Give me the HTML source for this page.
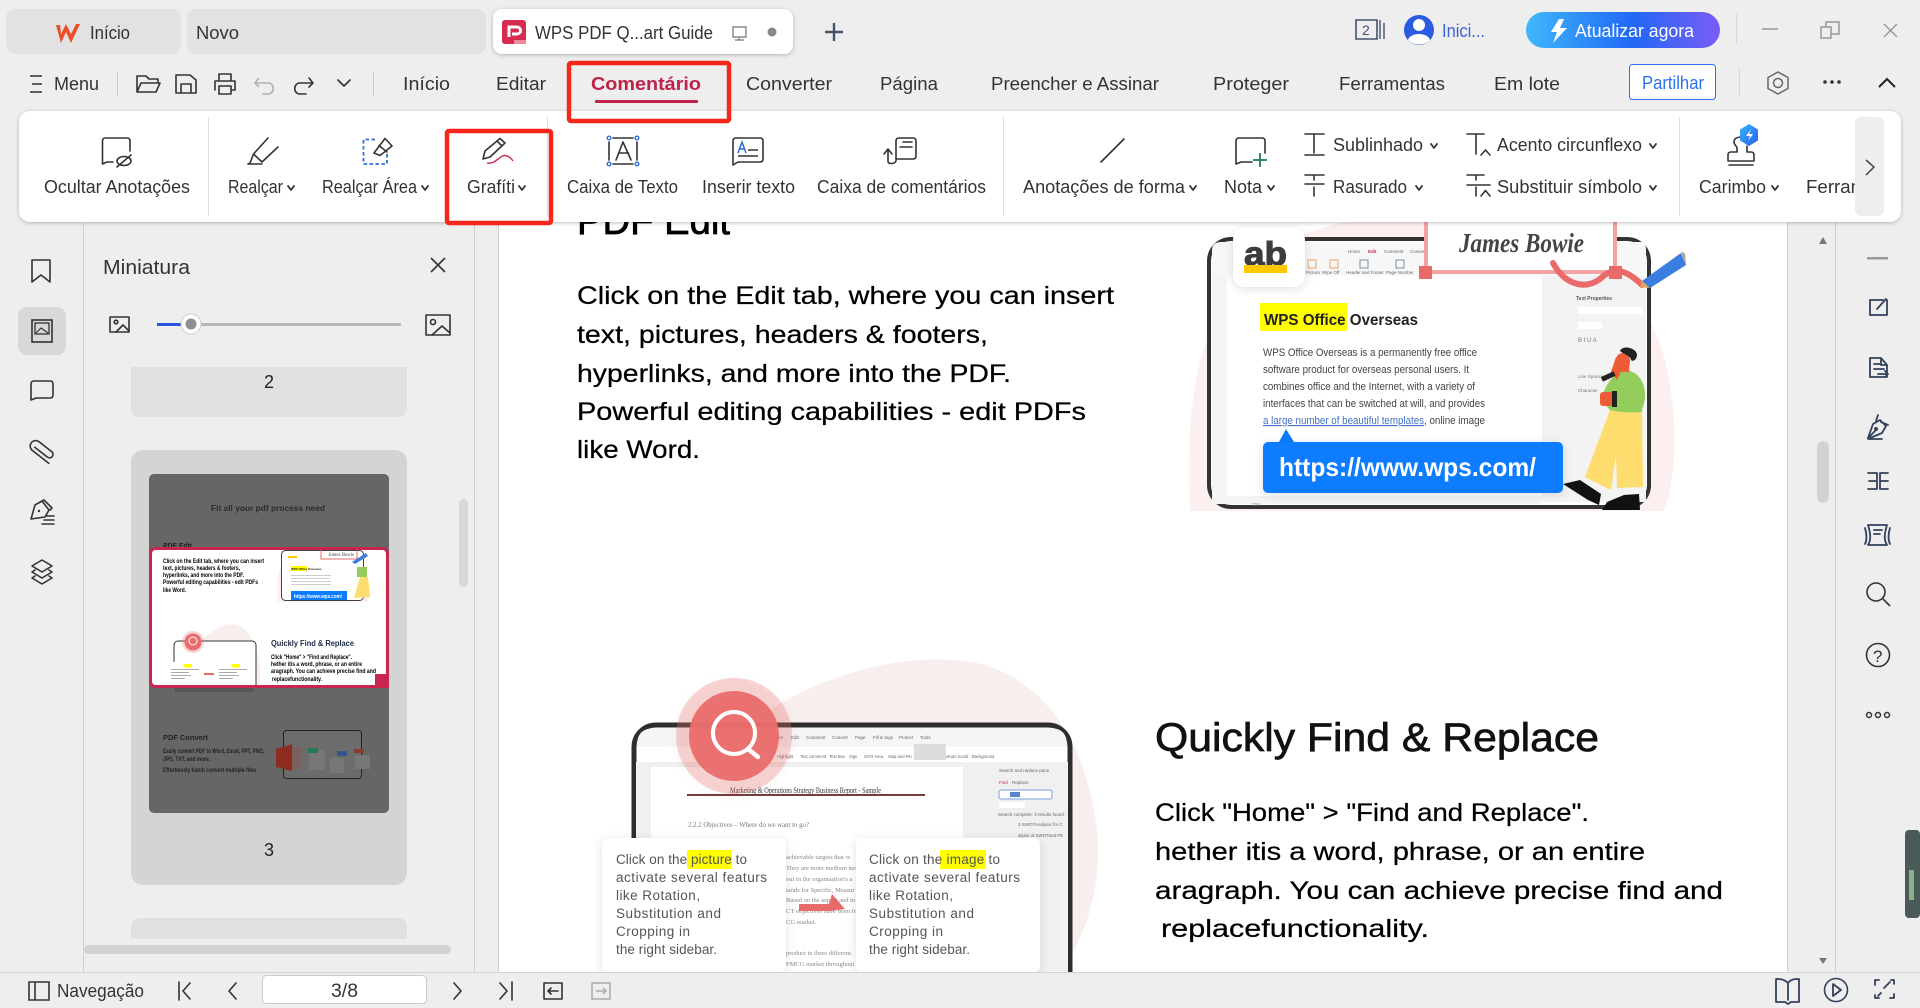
<!DOCTYPE html>
<html lang="pt"><head><meta charset="utf-8"><title>WPS PDF</title>
<style>
html,body{margin:0;padding:0;width:1920px;height:1008px;overflow:hidden;background:#eee}
svg{display:block}
text{font-family:"Liberation Sans",sans-serif;fill:#333;font-size:18px}
.i{fill:none;stroke:#333;stroke-width:1.6;stroke-linecap:round;stroke-linejoin:round}
.n{fill:none;stroke:#33415c;stroke-width:1.8;stroke-linecap:round;stroke-linejoin:round}
.d{fill:#000;font-size:25px;stroke:#000;stroke-width:.25}
.h{fill:#555;font-size:13.5px}
.s{fill:#444;font-size:11.3px}
.t{font-size:6px;fill:#000;font-weight:bold}
</style></head><body>
<svg width="1920" height="1008" viewBox="0 0 1920 1008" xmlns="http://www.w3.org/2000/svg">
<defs>
<linearGradient id="g" x1="0" x2="1" y1="0" y2="0"><stop offset="0" stop-color="#3fb8fb"/><stop offset=".55" stop-color="#2168f5"/><stop offset="1" stop-color="#7a5cf6"/></linearGradient>
<linearGradient id="b" x1="0" x2="1" y1="0" y2="1"><stop offset="0" stop-color="#35b6fb"/><stop offset="1" stop-color="#2a5ff0"/></linearGradient>
<filter id="sh" x="-5%" y="-20%" width="110%" height="140%"><feDropShadow dx="0" dy="1" stdDeviation="2" flood-color="#000" flood-opacity=".25"/></filter>
<filter id="sc" x="-15%" y="-15%" width="130%" height="130%"><feDropShadow dx="0" dy="2" stdDeviation="5" flood-color="#000" flood-opacity=".12"/></filter>
<clipPath id="docclip"><rect x="499" y="222" width="1288" height="750"/></clipPath>
<clipPath id="thumbclip"><rect x="152" y="550" width="234" height="135"/></clipPath>
<clipPath id="rb"><rect x="19" y="111" width="1836" height="111"/></clipPath>
</defs>
<rect width="1920" height="1008" fill="#eee"/>

<!-- DOCUMENT -->
<rect x="474" y="222" width="1" height="750" fill="#cfcfcf"/>
<rect x="498" y="222" width="1" height="750" fill="#d2d2d2"/>
<rect x="499" y="222" width="1288" height="750" fill="#fff"/>
<rect x="1787" y="222" width="1" height="750" fill="#cfcfcf"/>
<rect x="1835" y="222" width="1" height="750" fill="#cfcfcf"/>
<g clip-path="url(#docclip)">
<text x="577" y="234" style="font-size:40px;fill:#000;stroke:#000;stroke-width:.7" textLength="153" lengthAdjust="spacingAndGlyphs">PDF Edit</text>
<text class="d" x="577" y="304" textLength="537" lengthAdjust="spacingAndGlyphs">Click on the Edit tab, where you can insert</text>
<text class="d" x="577" y="343" textLength="411" lengthAdjust="spacingAndGlyphs">text, pictures, headers &amp; footers,</text>
<text class="d" x="577" y="382" textLength="434" lengthAdjust="spacingAndGlyphs">hyperlinks, and more into the PDF.</text>
<text class="d" x="577" y="420" textLength="509" lengthAdjust="spacingAndGlyphs">Powerful editing capabilities - edit PDFs</text>
<text class="d" x="577" y="458" textLength="123" lengthAdjust="spacingAndGlyphs">like Word.</text>

<text x="1155" y="751" style="font-size:40px;fill:#111;stroke:#111;stroke-width:.7" textLength="444" lengthAdjust="spacingAndGlyphs">Quickly Find &amp; Replace</text>
<text class="d" x="1155" y="821" textLength="434" lengthAdjust="spacingAndGlyphs">Click "Home" &gt; "Find and Replace".</text>
<text class="d" x="1155" y="860" textLength="490" lengthAdjust="spacingAndGlyphs">hether itis a word, phrase, or an entire</text>
<text class="d" x="1155" y="899" textLength="568" lengthAdjust="spacingAndGlyphs">aragraph. You can achieve precise find and</text>
<text class="d" x="1161" y="937" textLength="268" lengthAdjust="spacingAndGlyphs">replacefunctionality.</text>

<!-- Illustration 1 -->
<path d="M1190 511C1186 420 1192 340 1240 280C1290 225 1350 215 1440 215C1560 215 1640 270 1665 360C1678 420 1678 470 1664 511Z" fill="#fbefef"/>
<rect x="1209" y="239" width="440" height="268" rx="22" fill="#fff" stroke="#333" stroke-width="4"/>
<path d="M1212 250Q1212 242 1222 242H1640Q1646 242 1646 250V276H1212Z" fill="#f7f7f7"/>
<rect x="1212" y="276" width="15" height="226" fill="#f4f4f4"/>
<rect x="1542" y="276" width="104" height="226" fill="#f3f3f3"/>
<rect x="1212" y="496" width="330" height="8" fill="#f4f4f4"/>
<text x="1251" y="506" style="font-size:4.5px;fill:#777">1/16</text>
<g><text x="1348" y="253" style="font-size:4.5px;fill:#666">Home</text><text x="1368" y="253" style="font-size:4.5px;fill:#c8264f;font-weight:bold">Edit</text><text x="1384" y="253" style="font-size:4.5px;fill:#666">Comment</text><text x="1410" y="253" style="font-size:4.5px;fill:#666">Convert</text>
<text x="1306" y="274" style="font-size:4.5px;fill:#666">Picture</text><text x="1322" y="274" style="font-size:4.5px;fill:#666">Wipe Off</text><text x="1346" y="274" style="font-size:4.5px;fill:#666">Header and Footer</text><text x="1386" y="274" style="font-size:4.5px;fill:#666">Page Number</text></g>
<rect x="1308" y="260" width="8" height="8" fill="none" stroke="#e8a35c"/><rect x="1330" y="260" width="8" height="8" fill="none" stroke="#e8a35c"/><rect x="1360" y="260" width="8" height="8" fill="none" stroke="#7d8ca5"/><rect x="1396" y="260" width="8" height="8" fill="none" stroke="#7d8ca5"/>
<rect x="1426" y="222" width="189" height="50" fill="#fff"/>
<path d="M1426 222V272H1615V222" fill="none" stroke="#f2a3a3" stroke-width="4"/>
<rect x="1419" y="266" width="13" height="13" fill="#ea6a6a"/><rect x="1609" y="266" width="13" height="13" fill="#ea6a6a"/>
<text x="1459" y="252" style="font-family:'Liberation Serif',serif;font-style:italic;font-weight:bold;font-size:27px;fill:#444" textLength="125" lengthAdjust="spacingAndGlyphs">James Bowie</text>
<path d="M1553 263C1565 285 1585 290 1600 279C1612 267 1625 268 1642 285" fill="none" stroke="#ea6a6a" stroke-width="6" stroke-linecap="round"/>
<path d="M1642 281L1681 253L1686 265L1650 288Z" fill="#3a7de0"/><path d="M1642 281L1640 287L1650 288Z" fill="#e8a35c"/><path d="M1681 251L1686 265L1685 254Z" fill="#a98"/>
<rect x="1233" y="228" width="72" height="59" rx="12" fill="#fff" filter="url(#sc)"/>
<text x="1244" y="265" style="font-size:33px;font-weight:bold;fill:#3c3c3c;stroke:#3c3c3c;stroke-width:1" textLength="43" lengthAdjust="spacingAndGlyphs">ab</text>
<rect x="1244" y="265" width="43" height="8" fill="#ffc800"/>
<rect x="1260" y="303" width="87" height="28" fill="#ff0"/>
<text x="1264" y="325" style="font-size:16px;font-weight:bold;fill:#222" textLength="154" lengthAdjust="spacingAndGlyphs">WPS Office Overseas</text>
<text class="s" x="1263" y="356" textLength="214" lengthAdjust="spacingAndGlyphs">WPS Office Overseas is a permanently free office</text>
<text class="s" x="1263" y="373" textLength="206" lengthAdjust="spacingAndGlyphs">software product for overseas personal users. It</text>
<text class="s" x="1263" y="390" textLength="212" lengthAdjust="spacingAndGlyphs">combines office and the Internet, with a variety of</text>
<text class="s" x="1263" y="407" textLength="222" lengthAdjust="spacingAndGlyphs">interfaces that can be switched at will, and provides</text>
<text class="s" x="1263" y="424" style="fill:#4472c4;text-decoration:underline" textLength="161" lengthAdjust="spacingAndGlyphs">a large number of beautiful templates</text>
<text class="s" x="1424" y="424" textLength="61" lengthAdjust="spacingAndGlyphs">, online image</text>
<path d="M1279 442L1286 429L1294 442Z" fill="#0a7cff"/>
<rect x="1263" y="442" width="300" height="51" rx="5" fill="#0a7cff" filter="url(#sc)"/>
<text x="1279" y="476" style="font-size:26px;font-weight:bold;fill:#fff" textLength="257" lengthAdjust="spacingAndGlyphs">https://www.wps.com/</text>
<text x="1576" y="300" style="font-size:5px;font-weight:bold;fill:#555">Text Properties</text><rect x="1578" y="307" width="64" height="7" fill="#fff"/><rect x="1578" y="322" width="24" height="7" fill="#fff"/>
<text x="1578" y="342" style="font-size:6px;fill:#777">B  I  U  A</text><text x="1578" y="378" style="font-size:4.5px;fill:#777">Line Spacing</text><text x="1578" y="392" style="font-size:4.5px;fill:#777">Character</text>
<!-- person -->
<path d="M1610 410L1585 477L1611 490L1616 455L1617 488L1643 487L1642 410Z" fill="#ffdc6e"/>
<path d="M1601 400C1606 382 1615 372 1626 370C1640 372 1646 385 1645 398C1644 405 1642 408 1642 412C1630 413 1618 412 1610 410Z" fill="#93cd5c"/>
<path d="M1616 372L1618 358L1630 360L1629 372Z" fill="#ed5b37"/>
<circle cx="1623" cy="360" r="7" fill="#ed5b37"/>
<path d="M1620 351C1622 345 1635 347 1637 354C1637 360 1633 362 1631 360C1631 356 1625 355 1620 351Z" fill="#222"/>
<path d="M1611 372L1616 357L1621 360L1620 374L1617 380Z" fill="#ed5b37"/><rect x="1601" y="374" width="14" height="5" fill="#222" transform="rotate(-25 1608 376)"/>
<rect x="1600" y="392" width="13" height="14" rx="3" fill="#ed5b37"/><rect x="1612" y="391" width="5" height="16" fill="#222"/>
<path d="M1563 484L1580 480L1592 488L1601 494L1599 505L1588 500Z" fill="#111"/><path d="M1602 510L1607 502L1624 495L1639 494L1640 510Z" fill="#111"/>
</g>
<g clip-path="url(#docclip)">
<!-- Illustration 2 -->
<path d="M620 972C625 880 690 770 770 710C840 665 930 650 985 665C1050 685 1090 750 1098 840C1100 890 1085 940 1060 972Z" fill="#f9eeee"/>
<rect x="634" y="725" width="436" height="270" rx="22" fill="#fff" stroke="#2e2e2e" stroke-width="5"/>
<path d="M637 745Q637 728 655 728H1050Q1067 728 1067 745V747H637Z" fill="#f5f5f5"/>
<rect x="636" y="762" width="432" height="215" fill="#f0f0f0"/>
<rect x="651" y="767" width="312" height="205" fill="#fff"/>
<g><text x="771" y="739" style="font-size:4.5px;fill:#666">Home</text><text x="791" y="739" style="font-size:4.5px;fill:#666">Edit</text><text x="806" y="739" style="font-size:4.5px;fill:#666">Comment</text><text x="832" y="739" style="font-size:4.5px;fill:#666">Convert</text><text x="855" y="739" style="font-size:4.5px;fill:#666">Page</text><text x="873" y="739" style="font-size:4.5px;fill:#666">Fill &amp; Sign</text><text x="899" y="739" style="font-size:4.5px;fill:#666">Protect</text><text x="920" y="739" style="font-size:4.5px;fill:#666">Tools</text>
<text x="777" y="758" style="font-size:4.2px;fill:#666">Highlight</text><text x="800" y="758" style="font-size:4.2px;fill:#666">Text comment</text><text x="829" y="758" style="font-size:4.2px;fill:#666">Text Box</text><text x="849" y="758" style="font-size:4.2px;fill:#666">Sign</text><text x="864" y="758" style="font-size:4.2px;fill:#666">OCR Area</text><text x="888" y="758" style="font-size:4.2px;fill:#666">Snip and Pin</text><text x="916" y="758" style="font-size:4.2px;fill:#666">Find and Replace</text><text x="948" y="758" style="font-size:4.2px;fill:#666">Auto Scroll</text><text x="972" y="758" style="font-size:4.2px;fill:#666">Background</text></g>
<rect x="914" y="744" width="32" height="16" fill="#ddd"/>
<text x="730" y="793" style="font-family:'Liberation Serif',serif;font-size:8.5px;fill:#333" textLength="151" lengthAdjust="spacingAndGlyphs">Marketing &amp; Operations Strategy Business Report - Sample</text>
<rect x="687" y="794" width="238" height="2" fill="#7b3b3b"/>
<text x="688" y="827" style="font-family:'Liberation Serif',serif;font-size:7px;fill:#777" textLength="121" lengthAdjust="spacingAndGlyphs">2.2.2   Objectives – Where do we want to go?</text>
<g style="font-family:'Liberation Serif',serif"><text x="786" y="859" style="font-family:inherit;font-size:6.5px;fill:#888">achievable targets that w</text><text x="786" y="870" style="font-family:inherit;font-size:6.5px;fill:#888">They are more medium term</text><text x="786" y="881" style="font-family:inherit;font-size:6.5px;fill:#888">out in the organisation's a</text><text x="786" y="892" style="font-family:inherit;font-size:6.5px;fill:#888">tands for Specific, Measur</text><text x="786" y="902" style="font-family:inherit;font-size:6.5px;fill:#888">Based on the aspect and in</text><text x="786" y="913" style="font-family:inherit;font-size:6.5px;fill:#888">CT objectives have been for</text><text x="786" y="924" style="font-family:inherit;font-size:6.5px;fill:#888">CG market.</text><text x="786" y="955" style="font-family:inherit;font-size:6.5px;fill:#888">product in three different</text><text x="786" y="966" style="font-family:inherit;font-size:6.5px;fill:#888">FMCG market throughout</text></g>
<text x="999" y="772" style="font-size:4.5px;fill:#666">Search and replace pane</text><text x="999" y="784" style="font-size:4.5px;fill:#c8264f">Find</text><text x="1012" y="784" style="font-size:4.5px;fill:#666">Replace</text>
<rect x="999" y="790" width="53" height="9" rx="2" fill="#fff" stroke="#7aa0e0"/><rect x="1010" y="792" width="10" height="5" fill="#5a86d0"/><rect x="999" y="802" width="26" height="6" fill="#fff"/>
<text x="998" y="816" style="font-size:4.5px;fill:#666">Search complete: 3 results found.</text><text x="1018" y="826" style="font-size:4.5px;fill:#666">3 SWOTAnalysis for C</text><text x="1018" y="837" style="font-size:4.5px;fill:#666">alysis of SWOTand PE</text>
<circle cx="734" cy="736" r="58" fill="#ea6c6c" fill-opacity=".3" filter="url(#sc)"/>
<circle cx="734" cy="736" r="45" fill="#ea6c6c" fill-opacity=".96"/>
<circle cx="734" cy="733" r="21" fill="none" stroke="#fff" stroke-width="4"/>
<path d="M748 749L758 757" stroke="#fff" stroke-width="4.5" stroke-linecap="round"/>
<path d="M799 904H829L832 894L845 909L830 911H799Z" fill="#e96a6a"/>
<rect x="602" y="838" width="184" height="134" rx="6" fill="#fff" filter="url(#sc)"/>
<rect x="856" y="838" width="184" height="134" rx="6" fill="#fff" filter="url(#sc)"/>
<rect x="687" y="850" width="45" height="19" fill="#ff0"/><rect x="940" y="850" width="46" height="19" fill="#ff0"/>
<text class="h" x="616" y="864" textLength="131" lengthAdjust="spacing">Click on the picture to</text>
<text class="h" x="616" y="882" textLength="151" lengthAdjust="spacing">activate several featurs</text>
<text class="h" x="616" y="900" textLength="84" lengthAdjust="spacing">like Rotation,</text>
<text class="h" x="616" y="918" textLength="105" lengthAdjust="spacing">Substitution and</text>
<text class="h" x="616" y="936" textLength="74" lengthAdjust="spacing">Cropping in</text>
<text class="h" x="616" y="954" textLength="101" lengthAdjust="spacing">the right sidebar.</text>
<text class="h" x="869" y="864" textLength="131" lengthAdjust="spacing">Click on the image to</text>
<text class="h" x="869" y="882" textLength="151" lengthAdjust="spacing">activate several featurs</text>
<text class="h" x="869" y="900" textLength="84" lengthAdjust="spacing">like Rotation,</text>
<text class="h" x="869" y="918" textLength="105" lengthAdjust="spacing">Substitution and</text>
<text class="h" x="869" y="936" textLength="74" lengthAdjust="spacing">Cropping in</text>
<text class="h" x="869" y="954" textLength="101" lengthAdjust="spacing">the right sidebar.</text>
</g>

<!-- Vertical scrollbar of doc -->
<path d="M1823 237L1827 244H1819Z" fill="#777"/><path d="M1823 964L1827 958H1819Z" fill="#777"/>
<rect x="1817" y="441" width="12" height="62" rx="6" fill="#d2d2d2"/>

<!-- TABS -->
<rect x="6" y="9" width="175" height="45" rx="9" fill="#e2e2e2"/>
<rect x="187" y="9" width="299" height="45" rx="9" fill="#e2e2e2"/>
<rect x="493" y="9" width="300" height="45" rx="9" fill="#fff" filter="url(#sh)"/>
<path d="M56 25L61 43L66 32L71 43L80 24L76 24L71 34L66 24L61 34L60 25Z" fill="#ee4f2a"/>
<text x="90" y="39" textLength="40" lengthAdjust="spacingAndGlyphs">Início</text>
<text x="196" y="39" textLength="43" lengthAdjust="spacingAndGlyphs">Novo</text>
<rect x="502" y="20" width="24" height="24" rx="3" fill="#d8294f"/>
<path d="M509 37V27H517A3.5 3.5 0 0 1 517 34H512" fill="none" stroke="#fff" stroke-width="3"/><rect x="514" y="40" width="12" height="4" fill="#ee8a9c"/>
<text x="535" y="39" textLength="178" lengthAdjust="spacingAndGlyphs">WPS PDF Q...art Guide</text>
<path d="M733 27H746V37H733ZM739 37V40M735 40H744" fill="none" stroke="#8b8b8b" stroke-width="1.5"/>
<circle cx="772" cy="32" r="4.5" fill="#888"/>
<path d="M834 23V41M825 32H843" stroke="#44526c" stroke-width="2.4"/>

<path d="M1356 20H1377V39H1356Z" fill="none" stroke="#44526c" stroke-width="1.6"/><path d="M1380 20V39M1384 23V39" stroke="#44526c" stroke-width="1.4"/>
<text x="1362" y="35" style="font-size:14px;fill:#44526c">2</text>
<circle cx="1419" cy="30" r="15" fill="#2a5be0"/><circle cx="1419" cy="25" r="6" fill="#fff"/><path d="M1408 40C1410 32 1428 32 1430 40C1425 46 1413 46 1408 40Z" fill="#fff"/>
<text x="1442" y="37" style="fill:#3d62d8" textLength="43" lengthAdjust="spacingAndGlyphs">Inici...</text>
<rect x="1526" y="12" width="194" height="36" rx="18" fill="url(#g)"/>
<path d="M1559 19L1551 32H1557L1553 43L1567 28H1560L1564 19Z" fill="#fff"/>
<text x="1575" y="37" style="fill:#fff" textLength="119" lengthAdjust="spacingAndGlyphs">Atualizar agora</text>
<rect x="1736" y="14" width="1" height="30" fill="#d8d8d8"/>
<path d="M1762 29H1778" stroke="#999" stroke-width="1.5"/>
<path d="M1821 27H1831V38H1821ZM1826 27V22H1839V34H1831" fill="none" stroke="#999" stroke-width="1.5"/>
<path d="M1884 24L1897 37M1897 24L1884 37" stroke="#999" stroke-width="1.5"/>

<!-- MENU ROW -->
<path d="M30 76H42M32 84H42M30 92H42" stroke="#333" stroke-width="1.5"/>
<text x="54" y="90" textLength="45" lengthAdjust="spacingAndGlyphs">Menu</text>
<rect x="117" y="72" width="1" height="24" fill="#ccc"/>
<path class="i" d="M137 92V76H146L149 79H158V83M137 92L141 83H160L156 92Z"/>
<path class="i" d="M176 75H190L196 80V93H176ZM181 93V84H191V93"/>
<path class="i" d="M219 81V74H231V81M215 90V81H235V90H231M219 86H231V94H219Z"/>
<path d="M259 78L255 83L259 87M255 83H268C275 83 275 94 268 94H262" fill="none" stroke="#b0b0b0" stroke-width="1.6"/>
<path class="i" d="M309 78L313 83L309 87M313 83H300C293 83 293 94 300 94H306"/>
<path class="i" d="M338 80L344 86L350 80"/>
<rect x="373" y="72" width="1" height="24" fill="#ccc"/>
<text x="403" y="90" textLength="47" lengthAdjust="spacingAndGlyphs">Início</text>
<text x="496" y="90" textLength="50" lengthAdjust="spacingAndGlyphs">Editar</text>
<text x="591" y="90" style="fill:#bf2148;font-weight:bold" textLength="110" lengthAdjust="spacingAndGlyphs">Comentário</text>
<rect x="595" y="100" width="103" height="3" rx="1" fill="#bf2148"/>
<text x="746" y="90" textLength="86" lengthAdjust="spacingAndGlyphs">Converter</text>
<text x="880" y="90" textLength="58" lengthAdjust="spacingAndGlyphs">Página</text>
<text x="991" y="90" textLength="168" lengthAdjust="spacingAndGlyphs">Preencher e Assinar</text>
<text x="1213" y="90" textLength="76" lengthAdjust="spacingAndGlyphs">Proteger</text>
<text x="1339" y="90" textLength="106" lengthAdjust="spacingAndGlyphs">Ferramentas</text>
<text x="1494" y="90" textLength="66" lengthAdjust="spacingAndGlyphs">Em lote</text>
<rect x="1629.5" y="64.5" width="86" height="35" rx="3" fill="#fff" stroke="#2b70f0"/>
<text x="1642" y="89" style="fill:#2b70f0" textLength="62" lengthAdjust="spacingAndGlyphs">Partilhar</text>
<rect x="1739" y="68" width="1" height="29" fill="#d5d5d5"/>
<path d="M1778 72L1788 77.500V88.500L1778 94L1768 88.500V77.500Z" fill="none" stroke="#666" stroke-width="1.5" stroke-linejoin="round"/><circle cx="1778" cy="83" r="4.5" fill="none" stroke="#666" stroke-width="1.5"/>
<circle cx="1825" cy="82" r="1.8" fill="#333"/><circle cx="1832" cy="82" r="1.8" fill="#333"/><circle cx="1839" cy="82" r="1.8" fill="#333"/>
<path d="M1879 87L1887 79L1895 87" fill="none" stroke="#222" stroke-width="2"/>

<!-- RIBBON -->
<rect x="19" y="111" width="1882" height="111" rx="11" fill="#fff" filter="url(#sh)"/>
<rect x="208" y="117" width="1" height="99" fill="#ddd"/><rect x="547" y="117" width="1" height="99" fill="#ddd"/><rect x="1003" y="117" width="1" height="99" fill="#ddd"/><rect x="1679" y="117" width="1" height="99" fill="#ddd"/>
<rect x="1855" y="117" width="29" height="99" rx="6" fill="#eee"/>
<path d="M1866 160L1874 167L1866 175" fill="none" stroke="#444" stroke-width="1.5"/>
<g clip-path="url(#rb)">
<text x="44" y="193" textLength="146" lengthAdjust="spacingAndGlyphs">Ocultar Anotações</text>
<text x="228" y="193" textLength="55" lengthAdjust="spacingAndGlyphs">Realçar</text>
<text x="322" y="193" textLength="95" lengthAdjust="spacingAndGlyphs">Realçar Área</text>
<text x="467" y="193" textLength="48" lengthAdjust="spacingAndGlyphs">Grafíti</text>
<text x="567" y="193" textLength="111" lengthAdjust="spacingAndGlyphs">Caixa de Texto</text>
<text x="702" y="193" textLength="93" lengthAdjust="spacingAndGlyphs">Inserir texto</text>
<text x="817" y="193" textLength="169" lengthAdjust="spacingAndGlyphs">Caixa de comentários</text>
<text x="1023" y="193" textLength="162" lengthAdjust="spacingAndGlyphs">Anotações de forma</text>
<text x="1224" y="193" textLength="38" lengthAdjust="spacingAndGlyphs">Nota</text>
<text x="1333" y="151" textLength="90" lengthAdjust="spacingAndGlyphs">Sublinhado</text>
<text x="1333" y="193" textLength="74" lengthAdjust="spacingAndGlyphs">Rasurado</text>
<text x="1497" y="151" textLength="145" lengthAdjust="spacingAndGlyphs">Acento circunflexo</text>
<text x="1497" y="193" textLength="145" lengthAdjust="spacingAndGlyphs">Substituir símbolo</text>
<text x="1699" y="193" textLength="67" lengthAdjust="spacingAndGlyphs">Carimbo</text>
<text x="1806" y="193" textLength="106" lengthAdjust="spacingAndGlyphs">Ferramentas</text>
</g>
<g fill="none" stroke="#333" stroke-width="1.8" stroke-linecap="round" stroke-linejoin="round">
<path d="M288 186L291 190L294 186M422 186L425 190L428 186M519 186L522 190L525 186M1190 186L1193 190L1196 186M1268 186L1271 190L1274 186M1431 144L1434 148L1437 144M1416 186L1419 190L1422 186M1650 144L1653 148L1656 144M1650 186L1653 190L1656 186M1772 186L1775 190L1778 186"/>
</g>
<!-- ribbon icons -->
<path class="i" d="M102.500 164V141Q102.500 138 105 138H127Q130 138 130 141V151M102.500 164L107 162H113"/>
<ellipse class="i" cx="124" cy="161" rx="7" ry="4.500"/><path class="i" d="M117 167L131 155"/>
<path class="i" d="M268 138L253.500 154L262 162L278 147M253.500 154L250 163L248 164H262"/>
<path d="M375 139.500H363.500V164H387V152" fill="none" stroke="#2b6fd6" stroke-width="1.8" stroke-dasharray="3.500 2.500"/>
<path class="i" d="M374 153L385 138.500L392 146L380 155.500ZM379 145.500L387 152"/>
<path class="i" d="M483 159L485 151L500 138.500L505 143L490 157ZM497 141L502 146"/>
<path d="M487 163C495 165 500 155 505 155.500C509 156 511 158 513 161" fill="none" stroke="#c8264f" stroke-width="1.4"/>
<path class="i" d="M613 138H633M613 164H633M609 142V160M637 142V160"/><path class="i" d="M616 160L623 142L631 160M618.500 153H628.500"/>
<g fill="#fff" stroke="#2b6fd6" stroke-width="1.4"><circle cx="609" cy="138" r="1.800"/><circle cx="637" cy="138" r="1.800"/><circle cx="609" cy="164" r="1.800"/><circle cx="637" cy="164" r="1.800"/></g>
<path class="i" d="M733 165V141Q733 138 736 138H760Q763 138 763 141V159Q763 162 760 162H738Z"/><path d="M738 153L742 142L746 153M739.500 149H744.500" fill="none" stroke="#2b6fd6" stroke-width="1.5"/><path d="M748 150H758M738 156H758" stroke="#333" stroke-width="1.4"/>
<path class="i" d="M888 150V161Q888 163.500 891 163.500Q895 163.500 896 161V141Q896 138 899 138H913Q916 138 916 141V156Q916 159 913 159H897M884 154L888 149L892 154M903 142H912M900 147H912"/>
<path class="i" d="M1101 162L1124 139"/>
<path class="i" d="M1236 164V141Q1236 138 1239 138H1262Q1265 138 1265 141V153M1236 164L1241 162H1252"/><path d="M1260 153V167M1253 160H1267" stroke="#1f7a4f" stroke-width="1.8"/>
<path class="i" d="M1305 134H1324M1314 134V153M1305 155H1324"/>
<path class="i" d="M1305 175H1324M1314 175V180M1305 184H1324M1314 187V196"/>
<path class="i" d="M1467 134H1484M1476 134V154M1481 155L1485.500 150L1490 155"/>
<path class="i" d="M1467 175H1484M1476 175V180M1467 185H1490M1476 187V196M1481 196L1485.500 190.500L1490 196"/>
<path class="i" d="M1728 161V155Q1728 152 1731 152H1737V148C1737 146 1734 145 1734 142C1734 138 1738 137 1742 137M1747 152V146M1747 152H1751Q1754 152 1754 155V161H1728M1729 165H1753"/>
<path d="M1749 124L1758 129.500V140.500L1749 146L1740 140.500V129.500Z" fill="url(#b)"/><path d="M1751 129L1746 136H1750L1748 141L1753 134H1749Z" fill="#fff"/>

<!-- RED BOXES -->
<rect x="569" y="63" width="160" height="58" rx="2" fill="none" stroke="#f5261a" stroke-width="4.500"/>
<rect x="447" y="131" width="104" height="92" rx="2" fill="none" stroke="#f5261a" stroke-width="4.500"/>

<!-- LEFT SIDEBAR -->
<rect x="83" y="222" width="1" height="750" fill="#cfcfcf"/>
<path class="i" d="M32 260H50V282L41 275L32 282Z"/>
<rect x="18" y="307" width="48" height="48" rx="9" fill="#d8d8d8"/>
<rect x="32" y="320" width="20" height="22" fill="none" stroke="#333" stroke-width="1.6"/><rect x="35" y="323" width="14" height="11" fill="none" stroke="#333" stroke-width="1.3"/><path d="M36 333L41 328L48 333" fill="none" stroke="#333" stroke-width="1.2"/>
<path class="i" d="M31 400V384Q31 381 34 381H50Q53 381 53 384V395Q53 398 50 398H36Z"/>
<g transform="rotate(38 42 451)"><path class="i" d="M55 456.500H34a5.500 5.500 0 0 1 0-11H50a3.500 3.500 0 0 1 0 7H34"/></g>
<path class="i" d="M31 519L35 505L42 501L49 510L45 517ZM42 501L44 500L52 508L50 510M44 520H54M42 524H54M46 516H54"/><circle cx="39" cy="511" r="1.2" fill="#333"/>
<path class="i" d="M42 560L52 566L42 572L32 566ZM35 570L32 572L42 578L52 572L49 570M35 576L32 578L42 584L52 578L49 576"/>

<text x="103" y="274" style="font-size:20px" textLength="87" lengthAdjust="spacingAndGlyphs">Miniatura</text>
<path d="M431 258L445 272M445 258L431 272" stroke="#333" stroke-width="1.6"/>
<path class="i" d="M110 317H129V332H110Z"/><circle class="i" cx="116" cy="322" r="1.8"/><path class="i" d="M116 332L123 325L129 331"/>
<path class="i" d="M426 315H450V335H426Z"/><circle class="i" cx="433" cy="322" r="2.5"/><path class="i" d="M432 335L442 326L450 333"/>
<rect x="157" y="323" width="244" height="3" fill="#b8b8b8"/><rect x="157" y="323" width="26" height="3" fill="#2b54d8"/>
<circle cx="191" cy="324" r="10" fill="#fff" stroke="#ccc"/><circle cx="191" cy="324" r="5.500" fill="#8f8f8f"/>

<path d="M131 367H407V407Q407 417 397 417H141Q131 417 131 407Z" fill="#e0e0e0"/>
<text x="264" y="388" style="font-size:18px;fill:#222">2</text>
<rect x="131" y="450" width="276" height="435" rx="12" fill="#d4d4d4"/>
<rect x="149" y="474" width="240" height="339" rx="5" fill="#666"/>
<text x="211" y="511" style="font-size:8px;fill:#2b2b2b;font-weight:bold" textLength="114" lengthAdjust="spacingAndGlyphs">Fit all your pdf process need</text>
<text x="163" y="548" style="font-size:7px;fill:#222;font-weight:bold" textLength="29" lengthAdjust="spacingAndGlyphs">PDF Edit</text>
<rect x="150.500" y="548.500" width="237" height="138" rx="5" fill="#fff" stroke="#c8264f" stroke-width="3"/>
<g clip-path="url(#thumbclip)">
<text class="t" x="163" y="563" textLength="101" lengthAdjust="spacingAndGlyphs">Click on the Edit tab, where you can insert</text>
<text class="t" x="163" y="570" textLength="77" lengthAdjust="spacingAndGlyphs">text, pictures, headers &amp; footers,</text>
<text class="t" x="163" y="577" textLength="81" lengthAdjust="spacingAndGlyphs">hyperlinks, and more into the PDF.</text>
<text class="t" x="163" y="584" textLength="95" lengthAdjust="spacingAndGlyphs">Powerful editing capabilities - edit PDFs</text>
<text class="t" x="163" y="592" textLength="23" lengthAdjust="spacingAndGlyphs">like Word.</text>
<path d="M278 602C275 580 278 565 290 555H345C362 565 370 585 368 602Z" fill="#fbefef"/>
<rect x="281.500" y="550.500" width="82" height="50" rx="4" fill="#fff" stroke="#444" stroke-width="1"/>
<rect x="291" y="566" width="16" height="5" fill="#ff0"/>
<text x="291" y="570" style="font-size:3px;font-weight:bold;fill:#222">WPS Office Overseas</text>
<g fill="#ccc"><rect x="291" y="575" width="40" height="1"/><rect x="291" y="578" width="38" height="1"/><rect x="291" y="581" width="40" height="1"/><rect x="291" y="584" width="40" height="1"/></g>
<rect x="291" y="591" width="56" height="9" fill="#0a7cff"/><text x="294" y="598" style="font-size:5px;font-weight:bold;fill:#fff" textLength="48" lengthAdjust="spacingAndGlyphs">https://www.wps.com/</text>
<rect x="286" y="551" width="13" height="10" fill="#fff"/><rect x="288" y="556" width="9" height="2" fill="#ffc800"/>
<path d="M321 550V559H357V550" fill="none" stroke="#ea6a6a" stroke-width="1"/><text x="328" y="556" style="font-size:5px;font-family:'Liberation Serif',serif;font-style:italic;fill:#444">James Bowie</text>
<path d="M352 562L366 553L368 556L355 564Z" fill="#3a7de0"/>
<path d="M354 598L360 577L368 577L370 597Z" fill="#ffdc6e"/><rect x="357" y="567" width="10" height="10" fill="#93cd5c"/>
<path d="M175 688C180 660 200 635 225 625C245 620 262 640 260 688Z" fill="#f9eeee"/>
<rect x="174" y="641" width="82" height="50" rx="4" fill="#fff" stroke="#333" stroke-width="1"/>
<circle cx="193" cy="642" r="11" fill="#ea6c6c" fill-opacity=".3"/><circle cx="193" cy="642" r="8.500" fill="#ea6c6c"/><circle cx="193" cy="641" r="4" fill="none" stroke="#fff" stroke-width="1"/>
<rect x="168" y="662" width="34" height="26" fill="#fff"/><rect x="216" y="662" width="34" height="26" fill="#fff"/><rect x="184" y="664" width="8" height="3.500" fill="#ff0"/><rect x="232" y="664" width="8" height="3.500" fill="#ff0"/>
<g fill="#aaa"><rect x="171" y="669" width="28" height="1"/><rect x="171" y="672" width="18" height="1"/><rect x="171" y="675" width="20" height="1"/><rect x="171" y="678" width="14" height="1"/><rect x="219" y="669" width="28" height="1"/><rect x="219" y="672" width="18" height="1"/><rect x="219" y="675" width="20" height="1"/><rect x="219" y="678" width="14" height="1"/></g>
<rect x="204" y="673" width="10" height="2" fill="#e96a6a"/>
<text x="271" y="646" style="font-size:8px;font-weight:bold;fill:#1d2b45" textLength="83" lengthAdjust="spacingAndGlyphs">Quickly Find &amp; Replace</text>
<text class="t" x="271" y="659" textLength="81" lengthAdjust="spacingAndGlyphs">Click "Home" &gt; "Find and Replace".</text>
<text class="t" x="271" y="666" textLength="91" lengthAdjust="spacingAndGlyphs">hether itis a word, phrase, or an entire</text>
<text class="t" x="271" y="673" textLength="105" lengthAdjust="spacingAndGlyphs">aragraph. You can achieve precise find and</text>
<text class="t" x="272" y="681" textLength="50" lengthAdjust="spacingAndGlyphs">replacefunctionality.</text>
</g>
<rect x="375" y="674" width="14" height="14" fill="#c8264f"/>
<path d="M175 688H254V691Q254 692 252 692H177Q175 692 175 691Z" fill="#555"/>
<text x="163" y="740" style="font-size:7.500px;fill:#222;font-weight:bold" textLength="45" lengthAdjust="spacingAndGlyphs">PDF Convert</text>
<text class="t" x="163" y="753" style="fill:#222" textLength="101" lengthAdjust="spacingAndGlyphs">Easily convert PDF to Word, Excel, PPT, PNG,</text>
<text class="t" x="163" y="761" style="fill:#222" textLength="47" lengthAdjust="spacingAndGlyphs">JPG, TXT, and more.</text>
<text class="t" x="163" y="772" style="fill:#222" textLength="93" lengthAdjust="spacingAndGlyphs">Effortlessly batch convert multiple files</text>
<rect x="283.500" y="730.500" width="78" height="48" rx="3" fill="#6c6c6c" stroke="#222"/>
<path d="M276 749L292 744V771L276 767Z" fill="#8e2c22"/><rect x="292" y="747" width="9" height="23" fill="#7c6060"/>
<rect x="309" y="750" width="16" height="20" fill="#777"/><rect x="308" y="748" width="10" height="5" fill="#237a55"/>
<rect x="330" y="758" width="14" height="15" fill="#777"/><rect x="337" y="751" width="10" height="5" fill="#33568f"/><rect x="354" y="749" width="10" height="4" fill="#8c3b2b"/><rect x="355" y="755" width="15" height="14" fill="#777"/>
<text x="264" y="856" style="font-size:18px;fill:#222">3</text>
<path d="M131 939V928Q131 918 141 918H397Q407 918 407 928V939Z" fill="#e0e0e0"/>
<rect x="84" y="945" width="367" height="9" rx="4.500" fill="#d2d2d2"/>
<rect x="459" y="499" width="9" height="88" rx="4.500" fill="#d8d8d8"/>

<!-- RIGHT SIDEBAR -->
<rect x="1867" y="257" width="21" height="2.500" fill="#999"/>
<g transform="translate(0 3)"><path class="n" d="M1887 297V312H1870V297H1883M1877 306L1886 296"/></g>
<g transform="translate(0 4)"><path class="n" d="M1870 354V373H1887V361L1881 354ZM1881 354V361H1887M1874 360H1880M1874 365H1884M1878 370H1888M1885 367L1888 370L1885 373"/></g>
<g transform="translate(0 8)"><path class="n" d="M1868 430L1873 416L1880 412L1886 418L1882 425L1870 430ZM1868 430L1876 422M1878 407L1876 413M1888 417L1881 414M1868 431H1882"/><circle cx="1876" cy="421" r="2" fill="#33415c"/></g>
<g transform="translate(0 8)"><path class="n" d="M1868 465H1877V481H1868M1869 473H1877M1888 465H1880V481H1888M1880 473H1888"/></g>
<g transform="translate(0 10)"><path class="n" d="M1868 515H1887C1884 525 1884 530 1887 535H1868C1871 530 1871 525 1868 515ZM1865 518C1867 525 1867 530 1865 534M1890 518C1888 525 1888 530 1890 534M1874 520H1882M1874 524H1880"/></g>
<circle cx="1876" cy="592" r="9" fill="none" stroke="#333" stroke-width="1.6"/><path d="M1883 599L1890 606" stroke="#333" stroke-width="1.6"/>
<circle cx="1878" cy="655" r="11.500" fill="none" stroke="#333" stroke-width="1.6"/>
<text x="1873" y="662" style="font-size:17px;fill:#333">?</text>
<g fill="none" stroke="#333" stroke-width="1.5"><circle cx="1869" cy="715" r="2.500"/><circle cx="1878" cy="715" r="2.500"/><circle cx="1887" cy="715" r="2.500"/></g>
<rect x="1905" y="830" width="15" height="88" rx="4" fill="#4a5a58"/><rect x="1909" y="870" width="5" height="30" fill="#8bb08a"/>

<!-- STATUS BAR -->
<rect x="0" y="972" width="1920" height="36" fill="#eee"/>
<rect x="0" y="972" width="1920" height="1" fill="#d2d2d2"/>
<path d="M29 982H49V1000H29ZM35 982V1000" fill="none" stroke="#333" stroke-width="1.6"/>
<text x="57" y="997" textLength="87" lengthAdjust="spacingAndGlyphs">Navegação</text>
<path class="i" d="M179 982V1000M190 983L183 991L190 999M236 983L229 991L236 999M454 983L461 991L454 999M500 983L507 991L500 999M512 982V1000"/>
<rect x="262.500" y="975.500" width="164" height="28" rx="4" fill="#fff" stroke="#cbcbcb"/>
<text x="331" y="997" style="font-size:19px" textLength="27" lengthAdjust="spacingAndGlyphs">3/8</text>
<path class="i" d="M544 983H562V999H544ZM558 991H548M551 988L548 991L551 994"/>
<path d="M592 983H610V999H592ZM596 991H606M603 988L606 991L603 994" fill="none" stroke="#aaa" stroke-width="1.5"/>
<path class="n" d="M1788 983C1784 979 1780 979 1776 979V1002H1785L1788 1004L1791 1002H1799V979C1795 979 1791 979 1788 983ZM1788 983V1000"/>
<circle cx="1836" cy="990" r="11.500" fill="none" stroke="#33415c" stroke-width="1.600"/><path class="n" d="M1833 984L1841 990L1833 996Z"/>
<path class="n" d="M1875 985V980H1879M1891 980H1894V984M1894 994V998H1890M1879 998H1875V995M1884 988L1890 982M1878 996L1881 993"/>
</svg>
</body></html>
